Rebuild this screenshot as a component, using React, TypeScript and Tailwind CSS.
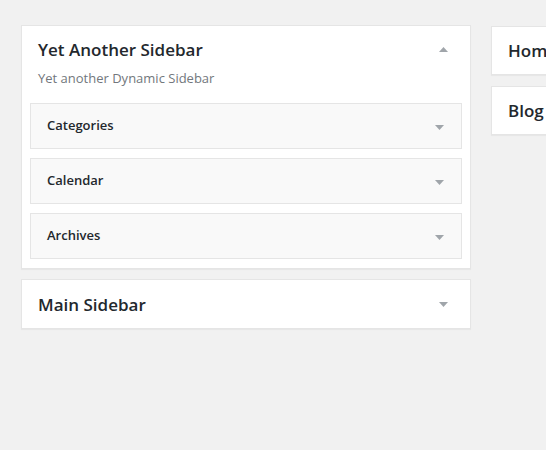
import React from 'react';

const Arrow: React.FC<{ up?: boolean }> = ({ up }) => (
    <svg width="9" height="5" viewBox="0 0 9 5" className="shrink-0 text-[#a0a5aa]" fill="currentColor">
        {up ? <path d="M0 5L4.5 0L9 5z" /> : <path d="M0 0h9L4.5 5z" />}
    </svg>
);

const widgets = ['Categories', 'Calendar', 'Archives'];

const App: React.FC = () => {
    return (
        <div
            className="min-h-[450px] w-[546px] overflow-hidden bg-[#f1f1f1] text-[#23282d]"
            style={{ fontFamily: '"Open Sans", "Noto Sans", sans-serif' }}
        >
            <div className="flex gap-5 pl-[21px] pt-[25px]">
                {/* left column */}
                <div className="flex w-[450px] shrink-0 flex-col gap-[10px]">
                    <div className="border border-[#e5e5e5] bg-white shadow-[0_1px_1px_rgba(0,0,0,0.04)]">
                        <div className="flex items-center justify-between pl-4 pr-[22px] pt-[15px]">
                            <h2 className="text-[17px] font-semibold leading-[17px]">Yet Another Sidebar</h2>
                            <Arrow up />
                        </div>
                        <p className="px-4 pt-[11px] text-[13px] leading-[19px] text-[#72777c]">Yet another Dynamic Sidebar</p>
                        <div className="flex flex-col gap-[9px] px-2 pb-[9px] pt-[15px]">
                            {widgets.map(w => (
                                <div
                                    key={w}
                                    className="flex h-[46px] items-center justify-between border border-[#e5e5e5] bg-[#f9f9f9] pl-4 pr-[17px]"
                                >
                                    <h3 className="text-[13px] font-semibold">{w}</h3>
                                    <div className="pt-[3px]"><Arrow /></div>
                                </div>
                            ))}
                        </div>
                    </div>
                    <div className="flex h-[50px] items-center justify-between border border-[#e5e5e5] bg-white pl-4 pr-[22px] shadow-[0_1px_1px_rgba(0,0,0,0.04)]">
                        <h2 className="text-[17px] font-semibold leading-[17px]">Main Sidebar</h2>
                        <Arrow />
                    </div>
                </div>

                {/* right column */}
                <div className="flex w-[200px] shrink-0 flex-col gap-[11px] pt-px">
                    {['Home', 'Blog'].map(t => (
                        <div
                            key={t}
                            className="flex h-[49px] items-center border border-[#e5e5e5] bg-white pl-4 shadow-[0_1px_1px_rgba(0,0,0,0.04)]"
                        >
                            <h2 className="text-[17px] font-semibold leading-[17px]">{t}</h2>
                        </div>
                    ))}
                </div>
            </div>
        </div>
    );
};

export default App;
